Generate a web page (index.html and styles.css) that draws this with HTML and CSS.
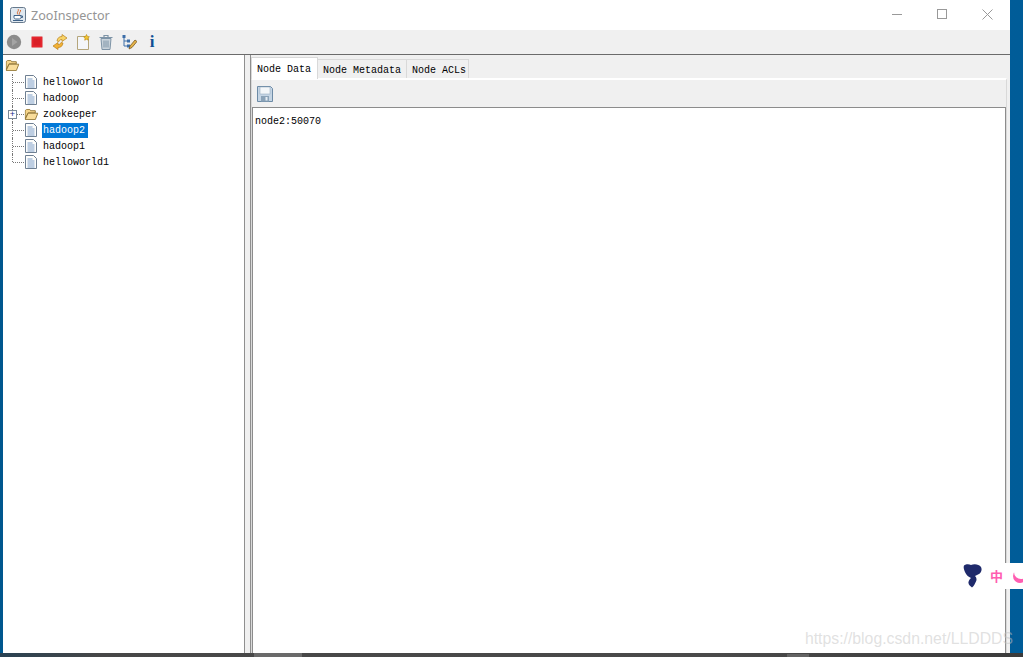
FILE: index.html
```html
<!DOCTYPE html>
<html lang="en">
<head>
    <meta charset="UTF-8">
    <title>ZooInspector</title>
    <link rel="stylesheet" href="styles.css">
</head>
<body>
    <div class="desktop">
        <div class="window">
            <div class="titlebar">
                <svg class="app-icon" width="16" height="16" viewBox="0 0 16 16">
                    <rect x="0.5" y="0.5" width="15" height="15" rx="2" fill="#dfe8f0" stroke="#66798c"/>
                    <path d="M8 2c1.500 2-2 3 0 5.500M10.500 3c.5 2-2 2.500-1 4.500" fill="none" stroke="#d8662a"/>
                    <path d="M4 8.500h7v2c0 1-1 1.500-2 1.500H6c-1 0-2-.5-2-1.500zM11 9h1.500v1.500H11" fill="#fff" stroke="#3f6288"/>
                    <path d="M3 13.500h10" stroke="#3f6288"/>
                </svg>
                <span class="title">ZooInspector</span>
                <div class="win-buttons">
                    <svg class="win-btn" width="10" height="10" viewBox="0 0 10 10"><path d="M0 5.500h10" stroke="#999"/></svg>
                    <svg class="win-btn" width="10" height="10" viewBox="0 0 10 10"><rect x="0.5" y="0.5" width="9" height="9" fill="none" stroke="#999"/></svg>
                    <svg class="win-btn" width="11" height="11" viewBox="0 0 11 11"><path d="M.5.5l10 10M10.500.5l-10 10" stroke="#999"/></svg>
                </div>
            </div>
            <div class="toolbar">
                <svg width="16" height="16" viewBox="0 0 16 16"><circle cx="8" cy="8" r="7.200" fill="#8c8c8c"/><path d="M6 4l5.500 4L6 12z" fill="#a4a4a4"/></svg>
                <svg width="16" height="16" viewBox="0 0 16 16"><rect x="2.500" y="2.500" width="11" height="11" rx="1" fill="#e5262e" stroke="#e58a8c"/><rect x="4.500" y="4.500" width="7" height="7" fill="#d91f26"/></svg>
                <svg width="16" height="16" viewBox="0 0 16 16">
                    <path d="M5 7C5.500 4 7 2.500 10 2.500V.5L15 4l-5 3.500v-2C8.500 5.500 7.500 6 7 7.500z" fill="#f8d468" stroke="#b9801a" stroke-width=".7"/>
                    <path d="M11 9c-.5 3-2 4.500-5 4.500v2L1 12l5-3.500v2c1.500 0 2.500-.5 3-2z" fill="#f2b136" stroke="#b9801a" stroke-width=".7"/>
                </svg>
                <svg width="16" height="16" viewBox="0 0 16 16"><path d="M2.500 2.500h8v2h3v11h-11z" fill="#f4f6fa" stroke="#b5a67c"/><path d="M11.500.5l.9 1.900 2 .3-1.400 1.500.3 2-1.800-.9-1.800.9.300-2L8.600 2.700l2-.3z" fill="#f3c531" stroke="#b8860b" stroke-width=".6"/></svg>
                <svg width="16" height="16" viewBox="0 0 16 16"><path d="M1.500 3.500h13M6 3V1.500h4V3" fill="none" stroke="#7d93a6" stroke-width="1.200"/><path d="M3 4.500l1 11h8l1-11z" fill="#c9d3db" stroke="#7d93a6"/><path d="M6 6.500v7M8 6.500v7M10 6.500v7" stroke="#7d93a6"/></svg>
                <svg width="16" height="16" viewBox="0 0 16 16"><path d="M3 3v9h3M3 7h3" fill="none" stroke="#3d6ea8"/><rect x="1.500" y="1" width="3" height="3" fill="#3d6ea8"/><rect x="6" y="5.500" width="3" height="3" fill="#3d6ea8"/><rect x="6" y="10.500" width="3" height="3" fill="#3d6ea8"/><path d="M8 15l1-3 5-6 2 1.500-5 6z" fill="#e5b44a" stroke="#6b4a12" stroke-width=".7"/></svg>
                <span class="info-icon">i</span>
            </div>
            <div class="split">
                <div class="tree">
                    <div class="root-row">
                        <svg class="ic" width="15" height="11" viewBox="0 0 16 13"><use href="#open-folder"/></svg>
                    </div>
                    <div class="tree-row"><span class="dots"></span><svg class="ic" width="12" height="14" viewBox="0 0 12 14"><use href="#doc"/></svg><span class="label">helloworld</span></div>
                    <div class="tree-row"><span class="dots"></span><svg class="ic" width="12" height="14" viewBox="0 0 12 14"><use href="#doc"/></svg><span class="label">hadoop</span></div>
                    <div class="tree-row folder-row"><span class="expander">+</span><span class="dots short"></span><svg class="ic" width="15" height="11" viewBox="0 0 16 13"><use href="#open-folder"/></svg><span class="label">zookeeper</span></div>
                    <div class="tree-row"><span class="dots"></span><svg class="ic" width="12" height="14" viewBox="0 0 12 14"><use href="#doc"/></svg><span class="label selected">hadoop2</span></div>
                    <div class="tree-row"><span class="dots"></span><svg class="ic" width="12" height="14" viewBox="0 0 12 14"><use href="#doc"/></svg><span class="label">hadoop1</span></div>
                    <div class="tree-row last"><span class="dots"></span><svg class="ic" width="12" height="14" viewBox="0 0 12 14"><use href="#doc"/></svg><span class="label">helloworld1</span></div>
                </div>
                <div class="divider"></div>
                <div class="right">
                    <div class="tabs">
                        <div class="tab active">Node Data</div>
                        <div class="tab">Node Metadata</div>
                        <div class="tab">Node ACLs</div>
                    </div>
                    <div class="tab-body">
                        <div class="node-toolbar">
                            <svg width="16" height="16" viewBox="0 0 16 16"><path d="M.5.500h13l2 2v13H.500z" fill="#c5d5e4" stroke="#6d8ba6"/><rect x="3" y="1" width="10" height="7" fill="#f4f7f9" stroke="#8ba3b8" stroke-width=".5"/><rect x="4" y="10" width="8" height="5.500" fill="#8ba3b8"/><rect x="8.500" y="11" width="2" height="3.500" fill="#e6edf3"/></svg>
                        </div>
                        <div class="editor">node2:50070</div>
                    </div>
                </div>
            </div>
        </div>
        <div class="taskbar">
            <div class="task-item first"></div>
            <div class="task-item second"></div>
        </div>
        <div class="ime">
            <svg width="19" height="24" viewBox="0 0 19 24"><path d="M1 1.500C3 0 6 0 8 1c3-1.500 8-1 10 2 1.500 3 0 6-3 7.500-1 .5-2 1-3 1.500 1.500 1.500 2 3.500 1 5.500-1 2-2 4.500-4 6-1.500-1.500-4-3-3.500-5.500.2-1.500 1.500-3 2.500-4-2.500-1-4.500-3-5.500-5C1.500 7 0 4 1 1.500z" fill="#1f2a6b"/></svg>
            <div class="ime-pill"><span class="ime-zh">中</span><span class="ime-moon"></span></div>
        </div>
        <div class="watermark">https://blog.csdn.net/LLDDDS</div>
    </div>

    <svg width="0" height="0" class="defs">
        <symbol id="open-folder" viewBox="0 0 16 13">
            <path d="M.5 11.500V2L2 .5h4L7 2h5.500v2.500H4L.5 11.500z" fill="#f6d58a" stroke="#8a6d2a"/>
            <path d="M.5 12.500L4 5h11.500l-3 7.500z" fill="#f9dd9a" stroke="#8a6d2a"/>
        </symbol>
        <symbol id="doc" viewBox="0 0 12 14">
            <path d="M.5.500h8l3 3v10H.500z" fill="#fdfdfb" stroke="#6e7f92"/>
            <path d="M2.500 4h5M2.500 6h7M2.500 8h7M2.500 10h7M2.500 12h7" stroke="#7f9fc9"/>
        </symbol>
    </svg>
</body>
</html>
```
FILE: styles.css
```css
* {
    box-sizing: border-box;
}
html, body {
    margin: 0;
    height: 100%;
    overflow: hidden;
}
.defs {
    position: absolute;
}
.desktop {
    position: relative;
    width: 1023px;
    height: 657px;
    background: linear-gradient(to right, #00578e, #00669f 40%, #005c98);
    display: flex;
    flex-direction: column;
}
.window {
    flex: 1;
    min-height: 0;
    margin: 0 13px 0 3px;
    background: #f0f0f0;
    display: flex;
    flex-direction: column;
}
.titlebar {
    height: 30px;
    background: #fff;
    display: flex;
    align-items: center;
    padding-left: 7px;
    flex-shrink: 0;
}
.title {
    margin-left: 5px;
    font-family: "Noto Sans", sans-serif;
    font-size: 12.6px;
    color: #959595;
}
.win-buttons {
    margin-left: auto;
    display: flex;
    align-items: center;
    gap: 35px;
    padding: 0 17px 2px 0;
}
.toolbar {
    height: 25px;
    background: #f0f0f0;
    border-bottom: 1px solid #6b6b6b;
    display: flex;
    align-items: center;
    gap: 7px;
    padding-left: 3px;
    flex-shrink: 0;
}
.info-icon {
    width: 16px;
    text-align: center;
    font-family: "Liberation Serif", serif;
    font-weight: bold;
    font-size: 17px;
    line-height: 16px;
    color: #0f4f94;
}
.split {
    flex: 1;
    min-height: 0;
    display: flex;
}
.tree {
    width: 242px;
    background: #fff;
    border-right: 1px solid #8f8f8f;
    font-family: "Liberation Mono", monospace;
    font-size: 10px;
    color: #000;
    padding-left: 2px;
}
.root-row {
    height: 19px;
    padding-top: 5px;
}
.root-row .ic {
    display: block;
}
.tree-row {
    position: relative;
    height: 16px;
    display: flex;
    align-items: center;
    padding-left: 20px;
}
.tree-row::before {
    content: "";
    position: absolute;
    left: 7px;
    top: 0;
    bottom: 0;
    border-left: 1px dotted #777;
}
.tree-row.last::before {
    bottom: 8px;
}
.dots {
    position: absolute;
    left: 8px;
    top: 8px;
    width: 11px;
    border-top: 1px dotted #777;
}
.expander {
    position: absolute;
    left: 3px;
    top: 4px;
    width: 9px;
    height: 9px;
    z-index: 1;
    background: #fff;
    border: 1px solid #7b8a99;
    color: #1b2f8a;
    font: 9px/7px "Liberation Sans", sans-serif;
    text-align: center;
}
.folder-row .ic {
    margin-left: -1px;
    margin-right: -2px;
}
.label {
    margin-left: 5px;
    padding: 0 3px 0 1px;
    line-height: 16px;
    height: 15px;
}
.selected {
    background: #0078d7;
    color: #fff;
}
.divider {
    width: 6px;
    background: #f0f0f0;
    border-right: 1px solid #8f8f8f;
}
.right {
    flex: 1;
    min-width: 0;
    padding-top: 2px;
    display: flex;
    flex-direction: column;
    font-family: "Liberation Mono", monospace;
    font-size: 10px;
    color: #000;
}
.tabs {
    display: flex;
    align-items: flex-end;
    height: 21px;
}
.tab {
    height: 19px;
    padding: 0 5px;
    line-height: 21px;
    background: #f0f0f0;
    border: 1px solid #d9d9d9;
    border-left: 0;
    border-bottom: 0;
}
.tab:last-child {
    padding-right: 2px;
}
.tab.active {
    height: 22px;
    line-height: 23px;
    background: #fff;
    border-left: 1px solid #d9d9d9;
    padding: 0 6px 0 5px;
    margin-bottom: -1px;
    position: relative;
}
.tab-body {
    flex: 1;
    min-height: 0;
    margin-right: 3px;
    border: 1px solid #d9d9d9;
    border-top: 2px solid #fff;
    border-bottom: 0;
    display: flex;
    flex-direction: column;
}
.node-toolbar {
    height: 27px;
    padding: 6px 0 0 5px;
    flex-shrink: 0;
}
.editor {
    flex: 1;
    background: #fff;
    border: 1px solid #8c8c8c;
    border-bottom: 0;
    padding: 8px 2px;
}
.taskbar {
    height: 4px;
    flex-shrink: 0;
    background: linear-gradient(to right, #2a4253, #474747 10%, #4a4a4a 70%, #3b3b3b);
    position: relative;
}
.task-item {
    position: absolute;
    bottom: 0;
}
.task-item.first {
    left: 254px;
    width: 48px;
    height: 4px;
    background: #6a6a6a;
}
.task-item.second {
    left: 787px;
    width: 22px;
    height: 3px;
    background: #636363;
}
.ime {
    position: absolute;
    left: 963px;
    top: 564px;
    display: flex;
    align-items: flex-start;
}
.ime-pill {
    width: 41px;
    height: 26px;
    margin-top: -1px;
    background: #fff;
    border-radius: 8px 0 0 8px;
    position: relative;
    overflow: hidden;
}
.ime-zh {
    position: absolute;
    left: 8px;
    top: 4px;
    font-family: "Noto Sans CJK SC", sans-serif;
    font-weight: bold;
    font-size: 13px;
    line-height: 18px;
    color: #ff5db1;
}
.ime-moon {
    position: absolute;
    left: 31px;
    top: 6px;
    width: 14px;
    height: 14px;
    border-radius: 50%;
    box-shadow: inset 1px -4px 0 #ff5db1;
}
.watermark {
    position: absolute;
    right: 10px;
    top: 630px;
    font-family: "Liberation Sans", sans-serif;
    font-size: 15.8px;
    color: rgba(195, 195, 195, 0.5);
}
```
